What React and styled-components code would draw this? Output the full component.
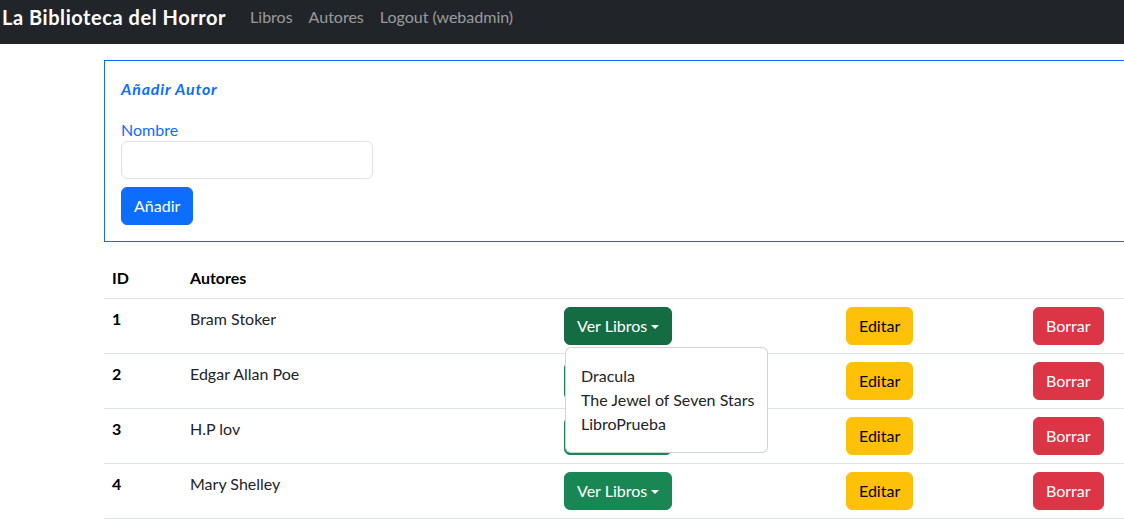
import React, { useState } from 'react';
import styled, { createGlobalStyle } from 'styled-components';

const autores = [
  { id: 1, nombre: 'Bram Stoker', libros: ['Dracula', 'The Jewel of Seven Stars', 'LibroPrueba'] },
  { id: 2, nombre: 'Edgar Allan Poe', libros: [] },
  { id: 3, nombre: 'H.P lov', libros: [] },
  { id: 4, nombre: 'Mary Shelley', libros: [] },
];

const GlobalStyle = createGlobalStyle`
  body {
    margin: 0;
    font-family: Lato, "Noto Sans", sans-serif;
    font-size: 16px;
    line-height: 1.5;
    color: #212529;
    background: #fff;
    overflow: hidden;
  }
  * { box-sizing: border-box; }
`;

const Navbar = styled.nav`
  height: 44px;
  background: #212529;
  display: flex;
  align-items: flex-start;
  padding: 3px 0 0 2px;
`;

const Brand = styled.a`
  font-size: 20px;
  font-weight: 700;
  color: #fff;
  line-height: 28px;
  margin-right: 16px;
  letter-spacing: 0.55px;
`;

const NavLink = styled.a`
  color: rgba(255, 255, 255, 0.55);
  line-height: 28px;
  padding: 0 8px;
`;

const Main = styled.main`
  margin-left: 104px;
  width: 1060px;
  padding-top: 16px;
`;

const Card = styled.section`
  border: 1px solid #0d6efd;
  padding: 15px 16px 16px;
`;

const CardTitle = styled.h5`
  margin: 0 0 16px;
  color: #0d6efd;
  font-style: italic;
  font-weight: 700;
  font-size: 16px;
  letter-spacing: 0.8px;
  line-height: 26px;
`;

const Label = styled.label`
  display: block;
  color: #0d6efd;
  line-height: 23px;
`;

const Input = styled.input`
  display: block;
  width: 252px;
  height: 38px;
  border: 1px solid #dee2e6;
  border-radius: 6px;
  font: inherit;
  padding: 6px 12px;
`;

const Button = styled.button`
  display: inline-flex;
  align-items: center;
  gap: 4px;
  height: 38px;
  padding: 0 12px;
  border: 1px solid ${p => p.$bg};
  border-radius: 6px;
  background: ${p => p.$bg};
  color: ${p => p.$fg || '#fff'};
  font: inherit;
  line-height: 24px;
  cursor: pointer;
  margin-top: ${p => p.$mt || 0}px;
`;

const Caret = styled.span`
  width: 0;
  height: 0;
  border-left: 4px solid transparent;
  border-right: 4px solid transparent;
  border-top: 4px solid currentColor;
  margin-top: 1px;
`;

const Table = styled.table`
  width: 100%;
  margin-top: 16px;
  border-collapse: collapse;
  table-layout: fixed;

  th, td {
    padding: 8px;
    text-align: left;
    vertical-align: top;
    border-bottom: 1px solid #dee2e6;
    line-height: 24px;
  }
  th { font-weight: 700; color: #000; }
  tbody tr td:first-child { font-weight: 700; color: #000; }
`;

const DropWrap = styled.div`
  position: relative;
  display: inline-block;
`;

const Menu = styled.ul`
  position: absolute;
  top: 40px;
  left: 1px;
  z-index: 5;
  width: 203px;
  margin: 0;
  padding: 16px 0;
  list-style: none;
  background: #fff;
  border: 1px solid rgba(0, 0, 0, 0.175);
  border-radius: 6px;
`;

const MenuItem = styled.li`
  padding: 0 15px;
  line-height: 24px;
  color: #212529;
  white-space: nowrap;
`;

const Libros = ({ libros, open }) => (
  <DropWrap>
    <Button $bg={open ? '#146c43' : '#198754'}>
      Ver Libros <Caret />
    </Button>
    {open && (
      <Menu>
        {libros.map(l => <MenuItem key={l}>{l}</MenuItem>)}
      </Menu>
    )}
  </DropWrap>
);

export default function App() {
  const [nombre, setNombre] = useState('');
  return (
    <>
      <GlobalStyle />
      <Navbar>
        <Brand>La Biblioteca del Horror</Brand>
        <NavLink>Libros</NavLink>
        <NavLink>Autores</NavLink>
        <NavLink>Logout (webadmin)</NavLink>
      </Navbar>
      <Main>
        <Card>
          <CardTitle>Añadir Autor</CardTitle>
          <Label>Nombre</Label>
          <Input value={nombre} onChange={e => setNombre(e.target.value)} />
          <Button $bg="#0d6efd" $mt={8}>Añadir</Button>
        </Card>
        <Table>
          <colgroup>
            <col style={{ width: 78 }} />
            <col style={{ width: 374 }} />
            <col style={{ width: 282 }} />
            <col style={{ width: 187 }} />
            <col />
          </colgroup>
          <thead>
            <tr>
              <th>ID</th>
              <th>Autores</th>
              <th />
              <th />
              <th />
            </tr>
          </thead>
          <tbody>
            {autores.map((a, i) => (
              <tr key={a.id}>
                <td>{a.id}</td>
                <td>{a.nombre}</td>
                <td><Libros libros={a.libros} open={i === 0} /></td>
                <td><Button $bg="#ffc107" $fg="#000">Editar</Button></td>
                <td><Button $bg="#dc3545">Borrar</Button></td>
              </tr>
            ))}
          </tbody>
        </Table>
      </Main>
    </>
  );
}
